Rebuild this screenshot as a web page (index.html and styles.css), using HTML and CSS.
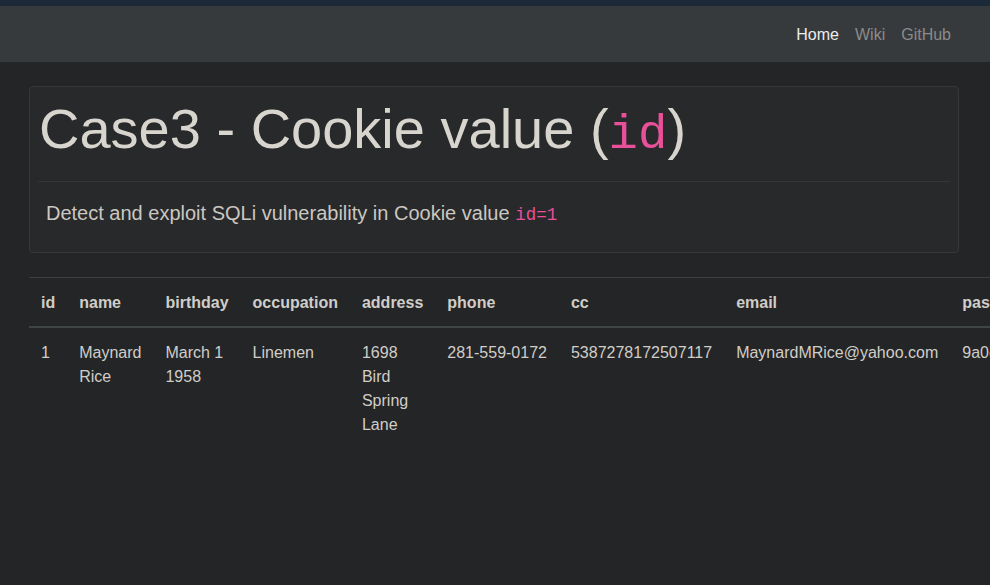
FILE: index.html
```html
<!DOCTYPE html>
<html lang="en">
<head>
<meta charset="utf-8">
<title>Case3 - Cookie value</title>
<link rel="stylesheet" href="styles.css">
</head>
<body>
<div class="topline"></div>
<nav class="navbar">
  <div class="nav-inner">
    <a class="nav-link active" href="#">Home</a>
    <a class="nav-link" href="#">Wiki</a>
    <a class="nav-link" href="#">GitHub</a>
  </div>
</nav>
<main class="container">
  <section class="jumbo">
    <h1 class="title">Case3 - Cookie value (<code>id</code>)</h1>
    <hr class="rule">
    <p class="lead">Detect and exploit SQLi vulnerability in Cookie value <code>id=1</code></p>
  </section>
  <table class="table">
    <thead>
      <tr>
        <th>id</th><th>name</th><th>birthday</th><th>occupation</th><th>address</th><th>phone</th><th>cc</th><th>email</th><th>password</th>
      </tr>
    </thead>
    <tbody>
      <tr>
        <td>1</td><td>Maynard Rice</td><td>March 1 1958</td><td>Linemen</td><td>1698 Bird Spring Lane</td><td class="nowrap">281-559-0172</td><td>5387278172507117</td><td>MaynardMRice@yahoo.com</td><td>9a0c2f8e5d2b7a41c6e3f90d8b7a5c12</td>
      </tr>
    </tbody>
  </table>
</main>
</body>
</html>
```
FILE: styles.css
```css
html, body {
  margin: 0;
  padding: 0;
  overflow-x: hidden;
}
body {
  background: #232527;
  color: #d1cdc7;
  font-family: "Liberation Sans", Arial, sans-serif;
  font-size: 16px;
  line-height: 1.5;
  min-height: 585px;
}
.topline {
  height: 6px;
  background: #1b2939;
}
.navbar {
  background: #373a3d;
  height: 56px;
  display: flex;
  align-items: center;
}
.nav-inner {
  width: 930px;
  margin-left: 29px;
  display: flex;
  justify-content: flex-end;
}
.nav-link {
  padding: 9px 8px 7px;
  line-height: 24px;
  color: #8b8b8b;
  text-decoration: none;
}
.nav-link.active {
  color: #ececec;
}
.container {
  width: 930px;
  margin-left: 29px;
  padding-top: 24px;
}
.jumbo {
  background: #27292b;
  border: 1px solid #35383b;
  border-radius: 4px;
  padding: 8px 8px 24px;
}
.title {
  margin: 0;
  font-size: 56px;
  font-weight: 300;
  line-height: 67px;
  color: #d8d4ce;
  padding-left: 1px;
}
.title code {
  font-size: 87.5%;
  line-height: 1;
}
code {
  font-family: "Liberation Mono", "DejaVu Sans Mono", monospace;
  color: #e8509a;
}
.rule {
  margin: 19px 0 16px;
  border: 0;
  border-top: 1px solid #34373a;
}
.lead {
  margin: 0;
  padding-left: 8px;
  font-size: 20px;
  font-weight: 300;
  line-height: 30px;
  color: #cbc7c0;
}
.lead code {
  font-size: 17.5px;
  line-height: 1;
}
.table {
  width: 100%;
  margin-top: 24px;
  border-collapse: collapse;
  color: #d1cdc7;
}
.table th, .table td {
  padding: 13px 12px 11px;
  text-align: left;
  vertical-align: top;
  border-top: 1px solid #3b3f42;
}
.table th {
  font-weight: bold;
  border-bottom: 2px solid #3f4447;
}
.table td {
  border-top: 0;
}
.nowrap {
  white-space: nowrap;
}
```
